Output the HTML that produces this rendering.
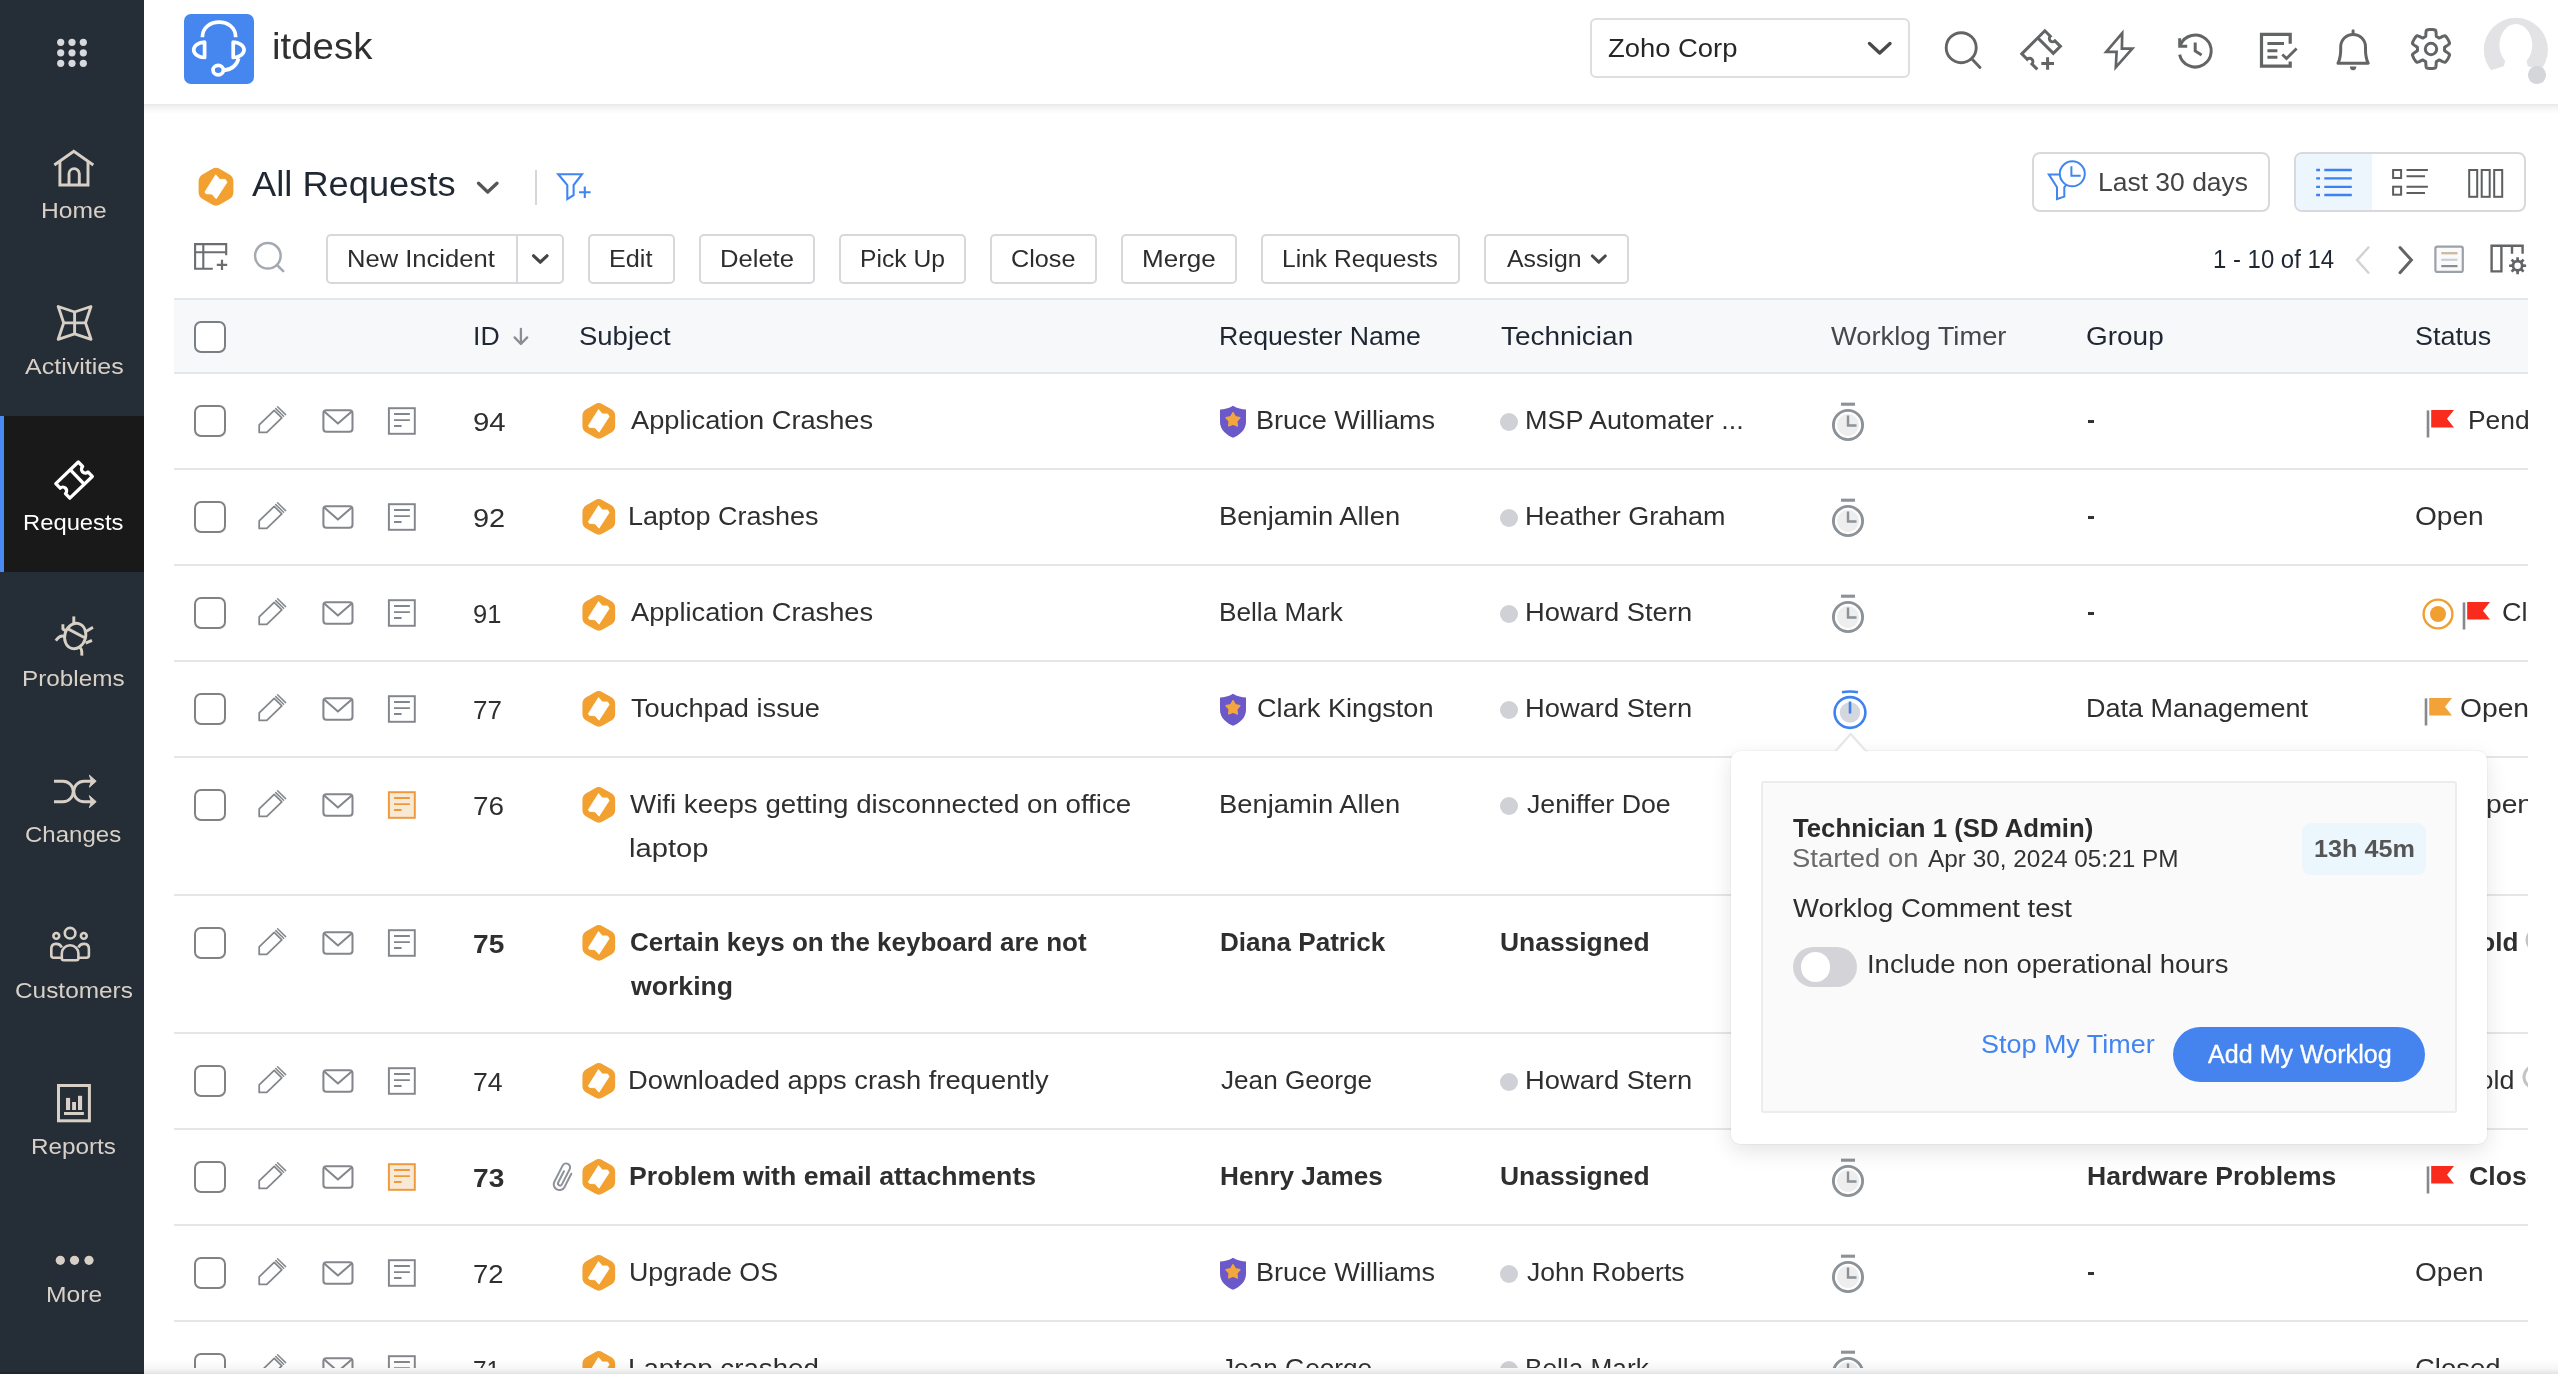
<!DOCTYPE html>
<html><head><meta charset="utf-8"><title>itdesk - All Requests</title>
<style>
html,body{margin:0;padding:0;background:#fff;}
body{width:2558px;height:1374px;overflow:hidden;font-family:"Liberation Sans",sans-serif;}
#root{position:relative;width:2558px;height:1374px;overflow:hidden;will-change:transform;}
.t{position:absolute;white-space:pre;font-family:"Liberation Sans",sans-serif;display:block;transform-origin:0 0;}
.btn{position:absolute;box-sizing:border-box;border:2px solid #d6d8dc;border-radius:5px;background:#fff;}
.cb{position:absolute;box-sizing:border-box;width:32px;height:32px;border:2px solid #808285;border-radius:7px;background:#fff;}
.hl{position:absolute;left:174px;width:2354px;height:2px;background:#e5e6e8;}
svg{overflow:visible;}

</style></head>
<body>
<div id="root">
<div style="position:absolute;left:174px;top:298px;width:2354px;height:76px;background:#f7f8fa;border-top:2px solid #e5e6e8;border-bottom:2px solid #e5e6e8;box-sizing:border-box"></div>
<div class="hl" style="top:468px"></div>
<div class="hl" style="top:564px"></div>
<div class="hl" style="top:660px"></div>
<div class="hl" style="top:756px"></div>
<div class="hl" style="top:894px"></div>
<div class="hl" style="top:1032px"></div>
<div class="hl" style="top:1128px"></div>
<div class="hl" style="top:1224px"></div>
<div class="hl" style="top:1320px"></div>
<div style="position:absolute;left:144px;top:104px;width:2414px;height:10px;background:linear-gradient(to bottom,#e8e8e8 0,#f1f1f1 25%,#f8f8f8 55%,#fff 100%)"></div>
<div style="position:absolute;left:184px;top:14px;width:70px;height:70px;background:#4587ef;border-radius:7px"></div>
<svg style="position:absolute;left:184px;top:14px;" width="70" height="70" viewBox="184 14 70 70"><g fill="none" stroke="#fff" stroke-width="3.7" stroke-linecap="butt" stroke-linejoin="round">
<path d="M202.4 37.2 C202.4 17 235.7 17 235.7 37.2"/>
<path d="M204.6 42.2 L204.6 57.5 A10.9 7.65 0 0 1 204.6 42.2 Z"/>
<path d="M233.2 42.2 L233.2 57.5 A10.9 7.65 0 0 0 233.2 42.2 Z"/>
<path d="M238.6 58.2 C236.6 66 231 69.6 223.6 70.4"/>
<ellipse cx="218.2" cy="70.1" rx="5.2" ry="4.7"/></g></svg>
<span class="t" style="left:272.10px;top:28px;font-size:37px;line-height:37px;font-weight:400;color:#303030;transform:scaleX(1.0383);">itdesk</span>
<div class="btn" style="left:1590px;top:17.5px;width:320px;height:60px;border-color:#dedede;border-radius:6px"></div>
<span class="t" style="left:1607.85px;top:36px;font-size:25.8px;line-height:25.8px;font-weight:400;color:#262626;transform:scaleX(1.0621);">Zoho Corp</span>
<svg style="position:absolute;left:1860px;top:30px;" width="40" height="36" viewBox="1860 30 40 36"><path d="M1869.5 43.5 L1879.7 53 L1890 43.5" fill="none" stroke="#4a4a4a" stroke-width="3.4" stroke-linecap="round" stroke-linejoin="round"/></svg>
<svg style="position:absolute;left:1936px;top:22px;" width="54" height="54" viewBox="1936 22 54 54"><g fill="none" stroke="#626466" stroke-width="2.9" stroke-linecap="round"><circle cx="1961.2" cy="47.7" r="15"/><path d="M1972.2 59.2 L1980 67.5"/></g></svg>
<svg style="position:absolute;left:2012px;top:20px;" width="58" height="60" viewBox="2012 20 58 60"><g transform="translate(2041.1 50.1) rotate(-45)" fill="none" stroke="#626466" stroke-width="3" stroke-linejoin="miter"><path d="M-16.3 11 L-16.3 3.3 A3.3 3.3 0 0 0 -16.3 -3.3 L-16.3 -11 L16.3 -11 L16.3 -3.3 A3.3 3.3 0 0 0 16.3 3.3 L16.3 11 L6.3 11 L6.3 -11"/></g><path d="M2041.3 63.5 L2054 63.5 M2047.6 57.2 L2047.6 69.8" stroke="#626466" stroke-width="3" fill="none"/></svg>
<svg style="position:absolute;left:2096px;top:22px;" width="46" height="56" viewBox="2096 22 46 56"><path d="M2122.2 33.2 L2106.2 51.9 L2116.6 51.9 L2115.8 67.3 L2132.3 48.6 L2121.9 48.6 Z" fill="none" stroke="#626466" stroke-width="2.7" stroke-linejoin="miter"/></svg>
<svg style="position:absolute;left:2170px;top:24px;" width="52" height="54" viewBox="2170 24 52 54"><g fill="none" stroke="#626466" stroke-width="3" stroke-linecap="butt" stroke-linejoin="miter">
<path d="M2180.5 44.7 A16 16 0 1 1 2179.6 54.6"/>
<path d="M2179.7 38.3 L2179.7 46.2 L2187.2 46.2"/><path d="M2195.2 42.6 L2195.2 51 L2201.6 55"/></g></svg>
<svg style="position:absolute;left:2252px;top:24px;" width="52" height="52" viewBox="2252 24 52 52"><g fill="none" stroke="#626466" stroke-width="3.2" stroke-linejoin="miter">
<path d="M2290.2 43.8 L2290.2 34.4 L2261.5 34.4 L2261.5 66.2 L2290.2 66.2 L2290.2 61.5"/>
<path d="M2267.4 43.5 L2284 43.5 M2267.4 50.7 L2277.4 50.7 M2267.4 57.3 L2277.4 57.3" stroke-width="3"/>
<path d="M2282.3 54.5 L2286.5 58.6 L2296.6 48.4" stroke-width="2.8"/></g></svg>
<svg style="position:absolute;left:2328px;top:24px;" width="50" height="54" viewBox="2328 24 50 54"><g fill="none" stroke="#626466" stroke-width="3" stroke-linejoin="round" stroke-linecap="round">
<path d="M2338 63.2 C2341.2 56.5 2340.7 52 2340.7 46.8 A12.4 12.4 0 0 1 2365.5 46.8 C2365.5 52 2365 56.5 2368.2 63.2 Z"/><path d="M2353.1 30.8 L2353.1 33.5"/></g>
<path d="M2349.9 66.6 A3.2 3.6 0 0 0 2356.3 66.6 Z" fill="#626466"/></svg>
<svg style="position:absolute;left:2404px;top:22px;" width="54" height="54" viewBox="2404 22 54 54"><g fill="none" stroke="#626466" stroke-width="3" stroke-linejoin="round"><path d="M2444.60 49.00 L2444.60 48.76 L2444.59 48.53 L2444.58 48.29 L2444.57 48.05 L2444.55 47.81 L2444.53 47.58 L2444.61 47.33 L2444.90 47.05 L2445.34 46.73 L2445.90 46.37 L2446.53 45.98 L2447.19 45.56 L2447.84 45.11 L2448.44 44.65 L2448.95 44.19 L2449.32 43.75 L2449.54 43.33 L2449.55 42.97 L2449.44 42.65 L2449.32 42.33 L2449.20 42.01 L2449.08 41.70 L2448.95 41.38 L2448.81 41.07 L2448.67 40.76 L2448.53 40.45 L2448.37 40.15 L2448.22 39.85 L2448.06 39.55 L2447.89 39.25 L2447.71 38.96 L2447.54 38.67 L2447.35 38.38 L2447.17 38.10 L2446.97 37.82 L2446.78 37.54 L2446.57 37.26 L2446.37 36.99 L2446.15 36.73 L2445.94 36.47 L2445.72 36.21 L2445.49 35.95 L2445.18 35.78 L2444.71 35.76 L2444.14 35.86 L2443.48 36.07 L2442.79 36.36 L2442.07 36.70 L2441.38 37.06 L2440.73 37.41 L2440.14 37.71 L2439.64 37.94 L2439.25 38.05 L2438.99 38.00 L2438.80 37.86 L2438.61 37.73 L2438.41 37.59 L2438.21 37.47 L2438.00 37.34 L2437.80 37.22 L2437.59 37.11 L2437.38 36.99 L2437.17 36.88 L2436.96 36.78 L2436.75 36.67 L2436.53 36.58 L2436.36 36.37 L2436.26 35.99 L2436.20 35.44 L2436.17 34.78 L2436.15 34.04 L2436.11 33.26 L2436.05 32.47 L2435.95 31.73 L2435.81 31.05 L2435.61 30.50 L2435.36 30.11 L2435.05 29.93 L2434.72 29.86 L2434.39 29.80 L2434.05 29.74 L2433.71 29.69 L2433.38 29.65 L2433.04 29.61 L2432.70 29.57 L2432.36 29.55 L2432.02 29.53 L2431.68 29.51 L2431.34 29.50 L2431.00 29.50 L2430.66 29.50 L2430.32 29.51 L2429.98 29.53 L2429.64 29.55 L2429.30 29.57 L2428.96 29.61 L2428.62 29.65 L2428.29 29.69 L2427.95 29.74 L2427.61 29.80 L2427.28 29.86 L2426.95 29.93 L2426.64 30.11 L2426.39 30.50 L2426.19 31.05 L2426.05 31.73 L2425.95 32.47 L2425.89 33.26 L2425.85 34.04 L2425.83 34.78 L2425.80 35.44 L2425.74 35.99 L2425.64 36.37 L2425.47 36.58 L2425.25 36.67 L2425.04 36.78 L2424.83 36.88 L2424.62 36.99 L2424.41 37.11 L2424.20 37.22 L2424.00 37.34 L2423.79 37.47 L2423.59 37.59 L2423.39 37.73 L2423.20 37.86 L2423.01 38.00 L2422.75 38.05 L2422.36 37.94 L2421.86 37.71 L2421.27 37.41 L2420.62 37.06 L2419.93 36.70 L2419.21 36.36 L2418.52 36.07 L2417.86 35.86 L2417.29 35.76 L2416.82 35.78 L2416.51 35.95 L2416.28 36.21 L2416.06 36.47 L2415.85 36.73 L2415.63 36.99 L2415.43 37.26 L2415.22 37.54 L2415.03 37.82 L2414.83 38.10 L2414.65 38.38 L2414.46 38.67 L2414.29 38.96 L2414.11 39.25 L2413.94 39.55 L2413.78 39.85 L2413.63 40.15 L2413.47 40.45 L2413.33 40.76 L2413.19 41.07 L2413.05 41.38 L2412.92 41.70 L2412.80 42.01 L2412.68 42.33 L2412.56 42.65 L2412.45 42.97 L2412.46 43.33 L2412.68 43.75 L2413.05 44.19 L2413.56 44.65 L2414.16 45.11 L2414.81 45.56 L2415.47 45.98 L2416.10 46.37 L2416.66 46.73 L2417.10 47.05 L2417.39 47.33 L2417.47 47.58 L2417.45 47.81 L2417.43 48.05 L2417.42 48.29 L2417.41 48.53 L2417.40 48.76 L2417.40 49.00 L2417.40 49.24 L2417.41 49.47 L2417.42 49.71 L2417.43 49.95 L2417.45 50.19 L2417.47 50.42 L2417.39 50.67 L2417.10 50.95 L2416.66 51.27 L2416.10 51.63 L2415.47 52.02 L2414.81 52.44 L2414.16 52.89 L2413.56 53.35 L2413.05 53.81 L2412.68 54.25 L2412.46 54.67 L2412.45 55.03 L2412.56 55.35 L2412.68 55.67 L2412.80 55.99 L2412.92 56.30 L2413.05 56.62 L2413.19 56.93 L2413.33 57.24 L2413.47 57.55 L2413.63 57.85 L2413.78 58.15 L2413.94 58.45 L2414.11 58.75 L2414.29 59.04 L2414.46 59.33 L2414.65 59.62 L2414.83 59.90 L2415.03 60.18 L2415.22 60.46 L2415.43 60.74 L2415.63 61.01 L2415.85 61.27 L2416.06 61.53 L2416.28 61.79 L2416.51 62.05 L2416.82 62.22 L2417.29 62.24 L2417.86 62.14 L2418.52 61.93 L2419.21 61.64 L2419.93 61.30 L2420.62 60.94 L2421.27 60.59 L2421.86 60.29 L2422.36 60.06 L2422.75 59.95 L2423.01 60.00 L2423.20 60.14 L2423.39 60.27 L2423.59 60.41 L2423.79 60.53 L2424.00 60.66 L2424.20 60.78 L2424.41 60.89 L2424.62 61.01 L2424.83 61.12 L2425.04 61.22 L2425.25 61.33 L2425.47 61.42 L2425.64 61.63 L2425.74 62.01 L2425.80 62.56 L2425.83 63.22 L2425.85 63.96 L2425.89 64.74 L2425.95 65.53 L2426.05 66.27 L2426.19 66.95 L2426.39 67.50 L2426.64 67.89 L2426.95 68.07 L2427.28 68.14 L2427.61 68.20 L2427.95 68.26 L2428.29 68.31 L2428.62 68.35 L2428.96 68.39 L2429.30 68.43 L2429.64 68.45 L2429.98 68.47 L2430.32 68.49 L2430.66 68.50 L2431.00 68.50 L2431.34 68.50 L2431.68 68.49 L2432.02 68.47 L2432.36 68.45 L2432.70 68.43 L2433.04 68.39 L2433.38 68.35 L2433.71 68.31 L2434.05 68.26 L2434.39 68.20 L2434.72 68.14 L2435.05 68.07 L2435.36 67.89 L2435.61 67.50 L2435.81 66.95 L2435.95 66.27 L2436.05 65.53 L2436.11 64.74 L2436.15 63.96 L2436.17 63.22 L2436.20 62.56 L2436.26 62.01 L2436.36 61.63 L2436.53 61.42 L2436.75 61.33 L2436.96 61.22 L2437.17 61.12 L2437.38 61.01 L2437.59 60.89 L2437.80 60.78 L2438.00 60.66 L2438.21 60.53 L2438.41 60.41 L2438.61 60.27 L2438.80 60.14 L2438.99 60.00 L2439.25 59.95 L2439.64 60.06 L2440.14 60.29 L2440.73 60.59 L2441.38 60.94 L2442.07 61.30 L2442.79 61.64 L2443.48 61.93 L2444.14 62.14 L2444.71 62.24 L2445.18 62.22 L2445.49 62.05 L2445.72 61.79 L2445.94 61.53 L2446.15 61.27 L2446.37 61.01 L2446.57 60.74 L2446.78 60.46 L2446.97 60.18 L2447.17 59.90 L2447.35 59.62 L2447.54 59.33 L2447.71 59.04 L2447.89 58.75 L2448.06 58.45 L2448.22 58.15 L2448.37 57.85 L2448.53 57.55 L2448.67 57.24 L2448.81 56.93 L2448.95 56.62 L2449.08 56.30 L2449.20 55.99 L2449.32 55.67 L2449.44 55.35 L2449.55 55.03 L2449.54 54.67 L2449.32 54.25 L2448.95 53.81 L2448.44 53.35 L2447.84 52.89 L2447.19 52.44 L2446.53 52.02 L2445.90 51.63 L2445.34 51.27 L2444.90 50.95 L2444.61 50.67 L2444.53 50.42 L2444.55 50.19 L2444.57 49.95 L2444.58 49.71 L2444.59 49.47 L2444.60 49.24Z"/><circle cx="2431" cy="49" r="5.7"/></g></svg>
<svg style="position:absolute;left:2480px;top:14px;" width="78" height="78" viewBox="2480 14 78 78"><circle cx="2515.85" cy="49.85" r="32.05" fill="#e3e3e5"/>
<ellipse cx="2515.85" cy="45" rx="16.4" ry="21" fill="#fff"/>
<path d="M2506 58 L2505.3 60.6 L2503.9 66.2 L2480 73.6 L2480 92 L2552 92 L2552 73.6 L2527.8 66.2 L2526.4 60.6 L2525.7 58 Z" fill="#fff"/>
<circle cx="2537" cy="75" r="9.1" fill="#d5d6da"/></svg>
<div style="position:absolute;left:0px;top:0px;width:144px;height:1374px;background:#252e37"></div>
<div style="position:absolute;left:0px;top:416px;width:144px;height:156px;background:#191919"></div>
<div style="position:absolute;left:0px;top:416px;width:4px;height:156px;background:#4a8af4"></div>
<svg style="position:absolute;left:0px;top:0px;" width="144" height="104" viewBox="0 0 144 104"><g fill="#d7d9dc"><circle cx="60.7" cy="42.3" r="3.6"/><circle cx="72" cy="42.3" r="3.6"/><circle cx="83.3" cy="42.3" r="3.6"/><circle cx="60.7" cy="52.8" r="3.6"/><circle cx="72" cy="52.8" r="3.6"/><circle cx="83.3" cy="52.8" r="3.6"/><circle cx="60.7" cy="63.3" r="3.6"/><circle cx="72" cy="63.3" r="3.6"/><circle cx="83.3" cy="63.3" r="3.6"/></g></svg>
<svg style="position:absolute;left:44px;top:140px;" width="60" height="56" viewBox="44 140 60 56"><g fill="none" stroke="#d8d0c6" stroke-width="2.9" stroke-linejoin="miter" stroke-linecap="butt">
<path d="M54.3 165 L73.8 151.3 L93.3 165"/><path d="M59.9 161.5 L59.9 185 L88 185 L88 161.5"/><path d="M69 185 L69 173.8 A5.15 5.15 0 0 1 79.3 173.8 L79.3 185"/></g></svg>
<span class="t" style="left:40.87px;top:200px;font-size:22.3px;line-height:22.3px;font-weight:400;color:#d8d0c6;transform:scaleX(1.1048);">Home</span>
<svg style="position:absolute;left:44px;top:292px;" width="62" height="62" viewBox="44 292 62 62"><g fill="none" stroke="#d8d0c6" stroke-width="2.9" stroke-linejoin="round">
<path d="M91.0 306.5 L74.6 312.0 L58.2 306.5 L63.7 322.9 L58.2 339.3 L74.6 333.8 L91.0 339.3 L85.5 322.9 Z"/><path d="M74.6 312.0 L74.6 333.79999999999995 M63.699999999999996 322.9 L85.5 322.9"/></g></svg>
<span class="t" style="left:25.00px;top:356px;font-size:22.3px;line-height:22.3px;font-weight:400;color:#d8d0c6;transform:scaleX(1.1221);">Activities</span>
<svg style="position:absolute;left:44px;top:450px;" width="62" height="62" viewBox="44 450 62 62"><g transform="translate(74.05 480.05) rotate(-44)" fill="none" stroke="#fff" stroke-width="3.3" stroke-linejoin="round">
<path d="M-15.6 -10.1 L15.6 -10.1 L15.6 -3.8 A3.8 3.8 0 0 0 15.6 3.8 L15.6 10.1 L-15.6 10.1 L-15.6 3.8 A3.8 3.8 0 0 0 -15.6 -3.8 Z"/><path d="M4.4 -10.1 L4.4 10.1"/></g></svg>
<span class="t" style="left:23.13px;top:512px;font-size:22.3px;line-height:22.3px;font-weight:400;color:#fff;transform:scaleX(1.0670);">Requests</span>
<svg style="position:absolute;left:44px;top:606px;" width="62" height="62" viewBox="44 606 62 62"><g fill="none" stroke="#d8d0c6" stroke-width="2.9" stroke-linecap="butt" stroke-linejoin="round">
<ellipse cx="75.2" cy="636" rx="10.4" ry="12.9" transform="rotate(16 75.2 636)"/>
<path d="M67.5 628.6 L84.3 637.5"/>
<path d="M73.8 623.2 L73.8 616.4"/><path d="M66.2 631.2 L62.9 629 L62.9 624.2"/>
<path d="M64.8 636.4 C61 635 58 637.5 55.8 640.6"/>
<path d="M86 631.6 L93 627.2"/><path d="M85.6 643.2 L92 640.4"/>
<path d="M78.6 647 C81.5 648 82 650 81.8 655.6"/></g></svg>
<span class="t" style="left:22.09px;top:668px;font-size:22.3px;line-height:22.3px;font-weight:400;color:#d8d0c6;transform:scaleX(1.0891);">Problems</span>
<svg style="position:absolute;left:44px;top:766px;" width="62" height="52" viewBox="44 766 62 52"><g fill="none" stroke="#d8d0c6" stroke-width="2.9" stroke-linecap="butt" stroke-linejoin="miter">
<path d="M54 781.2 L63 781.2 A10.25 10.25 0 0 1 63 801.7 L54 801.7"/>
<path d="M92 781.2 L84 781.2 A10.25 10.25 0 0 0 84 801.7 L92 801.7"/>
</g><path d="M89.4 775.2 L96.2 781.2 L89.4 787.2 L91.4 781.2 Z M89.4 795.7 L96.2 801.7 L89.4 807.7 L91.4 801.7 Z" fill="#d8d0c6" stroke="#d8d0c6" stroke-width="1" stroke-linejoin="round"/></svg>
<span class="t" style="left:25.37px;top:824px;font-size:22.3px;line-height:22.3px;font-weight:400;color:#d8d0c6;transform:scaleX(1.0772);">Changes</span>
<svg style="position:absolute;left:40px;top:920px;" width="66" height="50" viewBox="40 920 66 50"><g fill="none" stroke="#d8d0c6" stroke-width="2.6" stroke-linejoin="round">
<circle cx="70.1" cy="933.2" r="5.3"/><circle cx="56.3" cy="935.9" r="2.9"/><circle cx="83.8" cy="935.9" r="2.9"/>
<path d="M61.8 958.3 L61.8 953.5 A8.3 8.3 0 0 1 78.4 953.5 L78.4 958.3 Q78.4 960.3 76.4 960.3 L63.8 960.3 Q61.8 960.3 61.8 958.3 Z"/>
<path d="M61.8 957.7 L53.8 957.7 Q51.3 957.7 51.3 955.2 L51.3 949 C51.3 942.5 59.5 942.3 61.8 947.5"/>
<path d="M78.4 957.7 L86.4 957.7 Q88.9 957.7 88.9 955.2 L88.9 949 C88.9 942.5 80.7 942.3 78.4 947.5"/></g></svg>
<span class="t" style="left:14.96px;top:980px;font-size:22.3px;line-height:22.3px;font-weight:400;color:#d8d0c6;transform:scaleX(1.0934);">Customers</span>
<svg style="position:absolute;left:50px;top:1078px;" width="48" height="50" viewBox="50 1078 48 50"><rect x="58.5" y="1085.5" width="30.9" height="35.3" fill="none" stroke="#d8d0c6" stroke-width="3"/>
<g fill="#d8d0c6"><rect x="66" y="1097.9" width="4.1" height="12.1"/><rect x="72.1" y="1102" width="3.9" height="8"/><rect x="78" y="1095.8" width="4.1" height="14.2"/><rect x="64" y="1112" width="19.9" height="3"/></g></svg>
<span class="t" style="left:30.99px;top:1136px;font-size:22.3px;line-height:22.3px;font-weight:400;color:#d8d0c6;transform:scaleX(1.0887);">Reports</span>
<svg style="position:absolute;left:50px;top:1250px;" width="50" height="22" viewBox="50 1250 50 22"><g fill="#d8d0c6"><circle cx="60.3" cy="1260.3" r="4.6"/><circle cx="74.5" cy="1260.3" r="4.6"/><circle cx="89" cy="1260.3" r="4.6"/></g></svg>
<span class="t" style="left:45.57px;top:1284px;font-size:22.3px;line-height:22.3px;font-weight:400;color:#d8d0c6;transform:scaleX(1.1042);">More</span>
<svg style="position:absolute;left:197px;top:165px;" width="38" height="43" viewBox="197 165 38 43"><path d="M212.02 169.01 Q216.00 166.70 219.98 169.01 L229.42 174.49 Q233.40 176.80 233.40 181.40 L233.40 192.20 Q233.40 196.80 229.42 199.11 L219.98 204.59 Q216.00 206.90 212.02 204.59 L202.58 199.11 Q198.60 196.80 198.60 192.20 L198.60 181.40 Q198.60 176.80 202.58 174.49 Z" fill="#f2a02f"/><path d="M215.72 174.80 L219.63 179.36 L225.30 179.45 L227.07 182.15 L216.19 198.80 L212.00 194.05 L205.96 193.68 L204.93 192.01 Z" fill="#fff" stroke="#fff" stroke-width="0.8" stroke-linejoin="round"/></svg>
<span class="t" style="left:252.20px;top:167px;font-size:35.6px;line-height:35.6px;font-weight:400;color:#1f2733;transform:scaleX(1.0194);">All Requests</span>
<svg style="position:absolute;left:470px;top:174px;" width="36" height="28" viewBox="470 174 36 28"><path d="M478.5 183.2 L487.7 192 L497 183.2" fill="none" stroke="#555" stroke-width="3.3" stroke-linecap="round" stroke-linejoin="round"/></svg>
<div style="position:absolute;left:535px;top:169.5px;width:2px;height:35px;background:#d6d6d6"></div>
<svg style="position:absolute;left:552px;top:168px;" width="44" height="38" viewBox="552 168 44 38"><g fill="none" stroke="#3f86f1" stroke-width="2.1" stroke-linejoin="miter"><path d="M558.2 174.2 L582 174.2 L573.6 185.2 L573.6 195.2 L567.3 199.2 L567.3 185.2 Z"/><path d="M579 192.2 L590.6 192.2 M584.8 186.4 L584.8 198"/></g></svg>
<div class="btn" style="left:2032px;top:152px;width:238px;height:60px;border-color:#d7d9dd;border-radius:8px"></div>
<svg style="position:absolute;left:2044px;top:156px;" width="48" height="48" viewBox="2044 156 48 48"><g fill="none" stroke="#3f86f1" stroke-width="2" stroke-linejoin="miter" stroke-linecap="butt">
<circle cx="2072.3" cy="173.8" r="12.5"/><path d="M2071.4 166.3 L2071.4 175.7 L2080.7 175.7"/>
<path d="M2059.6 174.4 L2048.8 174.4 L2057 187.3 L2057 199 L2064.3 196.6 L2064.3 187.3 L2066.3 184.8"/></g></svg>
<span class="t" style="left:2097.79px;top:170px;font-size:25.7px;line-height:25.7px;font-weight:400;color:#444;transform:scaleX(1.0301);">Last 30 days</span>
<div class="btn" style="left:2294px;top:152px;width:232px;height:60px;border-color:#d7d9dd;border-radius:8px;overflow:hidden"><div style="position:absolute;left:0;top:0;width:76px;height:56px;background:#edf6fd"></div></div>
<svg style="position:absolute;left:2310px;top:162px;" width="48" height="40" viewBox="2310 162 48 40"><g stroke="#3b82f0" stroke-width="2.3" fill="none"><path d="M2316.2 170 L2320 170 M2324.3 170 L2351.8 170"/><path d="M2316.2 178.4 L2320 178.4 M2324.3 178.4 L2351.8 178.4"/><path d="M2316.2 186.8 L2320 186.8 M2324.3 186.8 L2351.8 186.8"/><path d="M2316.2 195 L2320 195 M2324.3 195 L2351.8 195"/></g></svg>
<svg style="position:absolute;left:2386px;top:162px;" width="48" height="40" viewBox="2386 162 48 40"><g stroke="#5d5e60" stroke-width="2" fill="none"><rect x="2393.1" y="170" width="8" height="8"/><rect x="2393.1" y="186.7" width="8" height="8"/><path d="M2406.5 170 L2427.9 170 M2406.5 176.3 L2425 176.3 M2406.5 186.8 L2427.9 186.8 M2406.5 192.9 L2425 192.9"/></g></svg>
<svg style="position:absolute;left:2462px;top:162px;" width="48" height="40" viewBox="2462 162 48 40"><g stroke="#5d5e60" stroke-width="2" fill="none"><rect x="2469.2" y="170" width="8" height="26.8"/><rect x="2481.7" y="170" width="8" height="26.8"/><rect x="2494.2" y="170" width="8" height="26.8"/></g></svg>
<svg style="position:absolute;left:190px;top:238px;" width="42" height="38" viewBox="190 238 42 38"><g fill="none" stroke="#6b6d70" stroke-width="2.1" stroke-linejoin="miter"><path d="M226.2 255.3 L226.2 244.1 L195.1 244.1 L195.1 268.7 L212.8 268.7 M195.1 252.2 L226.2 252.2 M203.3 244.1 L203.3 268.7"/><path d="M216.8 264.9 L227.2 264.9 M222 259.7 L222 270.1" stroke-width="2.2"/></g></svg>
<svg style="position:absolute;left:250px;top:238px;" width="40" height="40" viewBox="250 238 40 40"><g fill="none" stroke="#a4aab2" stroke-width="2.5" stroke-linecap="round"><circle cx="267.85" cy="255.8" r="12.8"/><path d="M277 265 L283.2 271.2"/></g></svg>
<div class="btn" style="left:326px;top:234px;width:238px;height:50px"></div>
<span class="t" style="left:347.20px;top:247px;font-size:24.4px;line-height:24.4px;font-weight:400;color:#2d2d2d;transform:scaleX(1.0479);">New Incident</span>
<div style="position:absolute;left:516px;top:236px;width:2px;height:46px;background:#d6d8dc"></div>
<svg style="position:absolute;left:526px;top:246px;" width="30" height="28" viewBox="526 246 30 28"><path d="M533.6 255.8 L540.3 262.2 L547 255.8" fill="none" stroke="#444" stroke-width="3.2" stroke-linecap="round" stroke-linejoin="round"/></svg>
<div class="btn" style="left:588px;top:234px;width:87px;height:50px"></div>
<span class="t" style="left:608.93px;top:247px;font-size:24.4px;line-height:24.4px;font-weight:400;color:#2d2d2d;transform:scaleX(1.0340);">Edit</span>
<div class="btn" style="left:699px;top:234px;width:116px;height:50px"></div>
<span class="t" style="left:719.70px;top:247px;font-size:24.4px;line-height:24.4px;font-weight:400;color:#2d2d2d;transform:scaleX(1.0489);">Delete</span>
<div class="btn" style="left:839px;top:234px;width:127px;height:50px"></div>
<span class="t" style="left:859.98px;top:247px;font-size:24.4px;line-height:24.4px;font-weight:400;color:#2d2d2d;transform:scaleX(1.0117);">Pick Up</span>
<div class="btn" style="left:990px;top:234px;width:107px;height:50px"></div>
<span class="t" style="left:1011.46px;top:247px;font-size:24.4px;line-height:24.4px;font-weight:400;color:#2d2d2d;transform:scaleX(1.0333);">Close</span>
<div class="btn" style="left:1121px;top:234px;width:116px;height:50px"></div>
<span class="t" style="left:1142.27px;top:247px;font-size:24.4px;line-height:24.4px;font-weight:400;color:#2d2d2d;transform:scaleX(1.0674);">Merge</span>
<div class="btn" style="left:1261px;top:234px;width:199px;height:50px"></div>
<span class="t" style="left:1281.98px;top:247px;font-size:24.4px;line-height:24.4px;font-weight:400;color:#2d2d2d;transform:scaleX(1.0082);">Link Requests</span>
<div class="btn" style="left:1484px;top:234px;width:145px;height:50px"></div>
<span class="t" style="left:1507.00px;top:247px;font-size:24.4px;line-height:24.4px;font-weight:400;color:#2d2d2d;transform:scaleX(1.0175);">Assign</span>
<svg style="position:absolute;left:1586px;top:246px;" width="28" height="28" viewBox="1586 246 28 28"><path d="M1592.4 256 L1598.8 262.2 L1605.2 256" fill="none" stroke="#484848" stroke-width="3.1" stroke-linecap="round" stroke-linejoin="round"/></svg>
<span class="t" style="left:2212.94px;top:246px;font-size:26.5px;line-height:26.5px;font-weight:400;color:#1f2733;transform:scaleX(0.9029);">1 - 10 of 14</span>
<svg style="position:absolute;left:2350px;top:240px;" width="26" height="40" viewBox="2350 240 26 40"><path d="M2368.4 247.5 L2357 260.1 L2368.4 272.7" fill="none" stroke="#d2d2d2" stroke-width="2.4" stroke-linecap="round" stroke-linejoin="miter"/></svg>
<svg style="position:absolute;left:2394px;top:240px;" width="26" height="40" viewBox="2394 240 26 40"><path d="M2400 247.5 L2411.4 260.1 L2400 272.7" fill="none" stroke="#636466" stroke-width="3" stroke-linecap="round" stroke-linejoin="miter"/></svg>
<svg style="position:absolute;left:2430px;top:242px;" width="38" height="36" viewBox="2430 242 38 36"><rect x="2435.4" y="246.7" width="27.4" height="25.2" rx="2" fill="#fafafa" stroke="#9ba1a9" stroke-width="2.2"/><path d="M2441.3 253.2 L2457.5 253.2" stroke="#cbbba9" stroke-width="2.4"/><path d="M2441.3 259.8 L2457.5 259.8" stroke="#c6d0da" stroke-width="2.2"/><path d="M2441.3 266.1 L2457.5 266.1" stroke="#8b8d90" stroke-width="2.2"/></svg>
<svg style="position:absolute;left:2486px;top:240px;" width="44" height="40" viewBox="2486 240 44 40"><g fill="none" stroke="#636466" stroke-width="2.4" stroke-linejoin="miter"><path d="M2522.6 253.8 L2522.6 245.7 L2491.6 245.7 L2491.6 271.4 L2501.4 271.4 L2501.4 245.7 M2512 245.7 L2512 253.8"/></g><path d="M2516.3 257.2 L2518.9 257.2 L2519.0 259.9 L2520.7 260.6 L2522.7 258.8 L2524.5 260.6 L2522.7 262.6 L2523.4 264.3 L2526.1 264.4 L2526.1 267.0 L2523.4 267.1 L2522.7 268.8 L2524.5 270.8 L2522.7 272.6 L2520.7 270.8 L2519.0 271.5 L2518.9 274.2 L2516.3 274.2 L2516.2 271.5 L2514.5 270.8 L2512.5 272.6 L2510.7 270.8 L2512.5 268.8 L2511.8 267.1 L2509.1 267.0 L2509.1 264.4 L2511.8 264.3 L2512.5 262.6 L2510.7 260.6 L2512.5 258.8 L2514.5 260.6 L2516.2 259.9Z" fill="#636466"/><circle cx="2517.6" cy="265.7" r="3.2" fill="#fff"/></svg>
<div class="cb" style="left:194px;top:321px;border-color:#7b7e83"></div>
<span class="t" style="left:472.83px;top:324px;font-size:25.4px;line-height:25.4px;font-weight:400;color:#1f2733;transform:scaleX(1.0502);">ID</span>
<svg style="position:absolute;left:506px;top:322px;" width="28" height="30" viewBox="506 322 28 30"><path d="M520.9 329 L520.9 343.6 M514.6 337.4 L520.9 344 L527.2 337.4" fill="none" stroke="#8a8d91" stroke-width="2.3" stroke-linecap="round" stroke-linejoin="round"/></svg>
<span class="t" style="left:579.38px;top:324px;font-size:25px;line-height:25px;font-weight:400;color:#1f2733;transform:scaleX(1.0994);">Subject</span>
<span class="t" style="left:1218.91px;top:324px;font-size:25px;line-height:25px;font-weight:400;color:#1f2733;transform:scaleX(1.0686);">Requester Name</span>
<span class="t" style="left:1501.14px;top:324px;font-size:25px;line-height:25px;font-weight:400;color:#1f2733;transform:scaleX(1.1190);">Technician</span>
<span class="t" style="left:1830.78px;top:324px;font-size:25px;line-height:25px;font-weight:400;color:#45474a;transform:scaleX(1.0916);">Worklog Timer</span>
<span class="t" style="left:2085.60px;top:324px;font-size:25px;line-height:25px;font-weight:400;color:#1f2733;transform:scaleX(1.1182);">Group</span>
<span class="t" style="left:2414.90px;top:324px;font-size:25px;line-height:25px;font-weight:400;color:#1f2733;transform:scaleX(1.0764);">Status</span>
<div style="position:absolute;left:2400px;top:374px;width:128px;height:1000px;overflow:hidden">
<svg style="position:absolute;left:23.800000000000182px;top:33px;" width="36" height="34" viewBox="0 0 36 34"><path d="M4 3.4 L4 30.5" stroke="#85888c" stroke-width="2.6"/><path d="M7.2 2.9 L30 2.9 L23 11.8 L30 20.6 L7.2 20.6 Z" fill="#f92b1d"/></svg>
<span class="t" style="left:67.64px;top:34px;font-size:25px;line-height:25px;font-weight:400;color:#2f2f2f;transform:scaleX(1.0548);">Pend</span>
<span class="t" style="left:14.75px;top:130px;font-size:25px;line-height:25px;font-weight:400;color:#2f2f2f;transform:scaleX(1.1236);">Open</span>
<svg style="position:absolute;left:21px;top:223.39999999999998px;" width="34" height="34" viewBox="0 0 34 34"><circle cx="17" cy="17" r="14.4" fill="none" stroke="#f0a030" stroke-width="2.4"/><circle cx="17" cy="17" r="8" fill="#f0a030"/></svg>
<svg style="position:absolute;left:59.80000000000018px;top:225px;" width="36" height="34" viewBox="0 0 36 34"><path d="M4 3.4 L4 30.5" stroke="#85888c" stroke-width="2.6"/><path d="M7.2 2.9 L30 2.9 L23 11.8 L30 20.6 L7.2 20.6 Z" fill="#f92b1d"/></svg>
<span class="t" style="left:102.40px;top:226px;font-size:25px;line-height:25px;font-weight:400;color:#2f2f2f;transform:scaleX(1.0800);">Closed</span>
<svg style="position:absolute;left:21.699999999999818px;top:321px;" width="36" height="34" viewBox="0 0 36 34"><path d="M4 3.4 L4 30.5" stroke="#85888c" stroke-width="2.6"/><path d="M7.2 2.9 L30 2.9 L23 11.8 L30 20.6 L7.2 20.6 Z" fill="#f2a238"/></svg>
<span class="t" style="left:60.34px;top:322px;font-size:25px;line-height:25px;font-weight:400;color:#2f2f2f;transform:scaleX(1.1288);">Open</span>
<span class="t" style="left:64.34px;top:418px;font-size:25px;line-height:25px;font-weight:400;color:#2f2f2f;transform:scaleX(1.1288);">Open</span>
<span class="t" style="left:16.96px;top:556px;font-size:25px;line-height:25px;font-weight:700;color:#2f2f2f;transform:scaleX(1.0423);">On Hold</span>
<span class="t" style="left:16.41px;top:694px;font-size:25px;line-height:25px;font-weight:400;color:#2f2f2f;transform:scaleX(1.0732);">On Hold</span>
<svg style="position:absolute;left:123px;top:551px;" width="30" height="30" viewBox="0 0 30 30"><circle cx="15" cy="15" r="11" fill="none" stroke="#c4c4c4" stroke-width="3"/></svg>
<svg style="position:absolute;left:120px;top:688px;" width="30" height="30" viewBox="0 0 30 30"><circle cx="15" cy="15" r="11" fill="none" stroke="#c4c4c4" stroke-width="3"/></svg>
<svg style="position:absolute;left:23.800000000000182px;top:789px;" width="36" height="34" viewBox="0 0 36 34"><path d="M4 3.4 L4 30.5" stroke="#85888c" stroke-width="2.6"/><path d="M7.2 2.9 L30 2.9 L23 11.8 L30 20.6 L7.2 20.6 Z" fill="#f92b1d"/></svg>
<span class="t" style="left:69.13px;top:790px;font-size:25px;line-height:25px;font-weight:700;color:#2f2f2f;transform:scaleX(1.0650);">Closed</span>
<span class="t" style="left:14.75px;top:886px;font-size:25px;line-height:25px;font-weight:400;color:#2f2f2f;transform:scaleX(1.1210);">Open</span>
<span class="t" style="left:14.53px;top:982px;font-size:25px;line-height:25px;font-weight:400;color:#2f2f2f;transform:scaleX(1.0987);">Closed</span>
</div>
<div class="cb" style="left:194px;top:405px"></div>
<svg style="position:absolute;left:254px;top:402px;" width="36" height="36" viewBox="254 402 36 36"><g transform="translate(0 0)"><g fill="none" stroke="#83878b" stroke-width="1.75" stroke-linejoin="round" stroke-linecap="round">
<path d="M259.2 432.4 L259.2 424.8 L274.2 410.4 L281.8 417.8 L266.8 432.4 Z"/><path d="M275.8 408.6 L283.6 416.2" stroke-width="1.5"/><path d="M277.6 406.8 L285.6 414.6" stroke-width="1.5"/></g></g></svg>
<svg style="position:absolute;left:318px;top:404px;" width="40" height="34" viewBox="318 404 40 34"><g transform="translate(0 0)"><g fill="none" stroke="#83878b" stroke-width="2.05" stroke-linejoin="round"><rect x="323.4" y="410.3" width="29.1" height="21.4" rx="3"/><path d="M324.5 411.8 L337.95 423.6 L351.4 411.8"/></g></g></svg>
<svg style="position:absolute;left:384px;top:402px;" width="36" height="38" viewBox="384 402 36 38"><g transform="translate(0 0)"><rect x="388.9" y="408.2" width="25.9" height="25.6" fill="none" stroke="#83878b" stroke-width="1.95"/><path d="M394 414 L409.9 414 M394 420.1 L409.9 420.1 M394 426 L401.6 426" stroke="#83878b" stroke-width="1.95" fill="none"/></g></svg>
<span class="t" style="left:472.94px;top:409px;font-size:26px;line-height:26px;font-weight:400;color:#2f2f2f;transform:scaleX(1.1296);">94</span>
<svg style="position:absolute;left:581px;top:401px;" width="36" height="40" viewBox="581 401 36 40"><path d="M595.06 404.18 Q598.80 402.01 602.54 404.18 L611.42 409.33 Q615.16 411.50 615.16 415.82 L615.16 425.98 Q615.16 430.30 611.42 432.47 L602.54 437.62 Q598.80 439.79 595.06 437.62 L586.18 432.47 Q582.44 430.30 582.44 425.98 L582.44 415.82 Q582.44 411.50 586.18 409.33 Z" fill="#f2a02f"/><path d="M598.54 409.62 L602.21 413.91 L607.54 413.99 L609.20 416.53 L598.97 432.18 L595.04 427.72 L589.36 427.37 L588.40 425.80 Z" fill="#fff" stroke="#fff" stroke-width="0.8" stroke-linejoin="round"/></svg>
<span class="t" style="left:630.90px;top:408px;font-size:25px;line-height:25px;font-weight:400;color:#2f2f2f;transform:scaleX(1.0889);">Application Crashes</span>
<svg style="position:absolute;left:1219px;top:404px;" width="28" height="35" viewBox="1219 404 28 35"><path d="M1233 405.8 C1237 408.40000000000003 1242 409.40000000000003 1246 409.6 L1246 421.8 C1246 430.3 1239 435.3 1233 437.8 C1227 435.3 1220 430.3 1220 421.8 L1220 409.6 C1224 409.40000000000003 1229 408.40000000000003 1233 405.8 Z" fill="#6b58c9"/><path d="M1233.00 412.80 L1230.71 416.84 L1226.15 417.78 L1229.29 421.21 L1228.77 425.82 L1233.00 423.90 L1237.23 425.82 L1236.71 421.21 L1239.85 417.78 L1235.29 416.84 Z" fill="#f3a63c" stroke="#f3a63c" stroke-width="1.6" stroke-linejoin="round"/></svg>
<span class="t" style="left:1255.88px;top:408px;font-size:25px;line-height:25px;font-weight:400;color:#2f2f2f;transform:scaleX(1.0837);">Bruce Williams</span>
<div style="position:absolute;left:1500px;top:413px;width:18px;height:18px;background:#d0d1d6;border-radius:50%"></div>
<span class="t" style="left:1525.09px;top:408px;font-size:25px;line-height:25px;font-weight:400;color:#2f2f2f;transform:scaleX(1.0806);">MSP Automater ...</span>
<svg style="position:absolute;left:1828px;top:399px;" width="40" height="46" viewBox="1828 399 40 46"><circle cx="1848" cy="425" r="14.6" fill="#fff" stroke="#8b9298" stroke-width="2.9"/><circle cx="1848" cy="425" r="11" fill="#eeeeef"/><path d="M1841 404.2 L1855 404.2" stroke="#8b9298" stroke-width="3.1"/><path d="M1848 415.5 L1848 425.5 L1856.5 425.5" stroke="#8b9298" stroke-width="2.4" fill="none"/></svg>
<div style="position:absolute;left:2088px;top:420.4px;width:6px;height:2.6px;background:#333"></div>
<div class="cb" style="left:194px;top:501px"></div>
<svg style="position:absolute;left:254px;top:498px;" width="36" height="36" viewBox="254 498 36 36"><g transform="translate(0 96)"><g fill="none" stroke="#83878b" stroke-width="1.75" stroke-linejoin="round" stroke-linecap="round">
<path d="M259.2 432.4 L259.2 424.8 L274.2 410.4 L281.8 417.8 L266.8 432.4 Z"/><path d="M275.8 408.6 L283.6 416.2" stroke-width="1.5"/><path d="M277.6 406.8 L285.6 414.6" stroke-width="1.5"/></g></g></svg>
<svg style="position:absolute;left:318px;top:500px;" width="40" height="34" viewBox="318 500 40 34"><g transform="translate(0 96)"><g fill="none" stroke="#83878b" stroke-width="2.05" stroke-linejoin="round"><rect x="323.4" y="410.3" width="29.1" height="21.4" rx="3"/><path d="M324.5 411.8 L337.95 423.6 L351.4 411.8"/></g></g></svg>
<svg style="position:absolute;left:384px;top:498px;" width="36" height="38" viewBox="384 498 36 38"><g transform="translate(0 96)"><rect x="388.9" y="408.2" width="25.9" height="25.6" fill="none" stroke="#83878b" stroke-width="1.95"/><path d="M394 414 L409.9 414 M394 420.1 L409.9 420.1 M394 426 L401.6 426" stroke="#83878b" stroke-width="1.95" fill="none"/></g></svg>
<span class="t" style="left:472.96px;top:505px;font-size:26px;line-height:26px;font-weight:400;color:#2f2f2f;transform:scaleX(1.1144);">92</span>
<svg style="position:absolute;left:581px;top:497px;" width="36" height="40" viewBox="581 497 36 40"><path d="M595.06 500.18 Q598.80 498.01 602.54 500.18 L611.42 505.33 Q615.16 507.50 615.16 511.82 L615.16 521.98 Q615.16 526.30 611.42 528.47 L602.54 533.62 Q598.80 535.79 595.06 533.62 L586.18 528.47 Q582.44 526.30 582.44 521.98 L582.44 511.82 Q582.44 507.50 586.18 505.33 Z" fill="#f2a02f"/><path d="M598.54 505.62 L602.21 509.91 L607.54 509.99 L609.20 512.53 L598.97 528.18 L595.04 523.72 L589.36 523.37 L588.40 521.80 Z" fill="#fff" stroke="#fff" stroke-width="0.8" stroke-linejoin="round"/></svg>
<span class="t" style="left:628.49px;top:504px;font-size:25px;line-height:25px;font-weight:400;color:#2f2f2f;transform:scaleX(1.0798);">Laptop Crashes</span>
<span class="t" style="left:1218.86px;top:504px;font-size:25px;line-height:25px;font-weight:400;color:#2f2f2f;transform:scaleX(1.0952);">Benjamin Allen</span>
<div style="position:absolute;left:1500px;top:509px;width:18px;height:18px;background:#d0d1d6;border-radius:50%"></div>
<span class="t" style="left:1525.10px;top:504px;font-size:25px;line-height:25px;font-weight:400;color:#2f2f2f;transform:scaleX(1.0767);">Heather Graham</span>
<svg style="position:absolute;left:1828px;top:495px;" width="40" height="46" viewBox="1828 495 40 46"><circle cx="1848" cy="521" r="14.6" fill="#fff" stroke="#8b9298" stroke-width="2.9"/><circle cx="1848" cy="521" r="11" fill="#eeeeef"/><path d="M1841 500.2 L1855 500.2" stroke="#8b9298" stroke-width="3.1"/><path d="M1848 511.5 L1848 521.5 L1856.5 521.5" stroke="#8b9298" stroke-width="2.4" fill="none"/></svg>
<div style="position:absolute;left:2088px;top:516.4px;width:6px;height:2.6px;background:#333"></div>
<div class="cb" style="left:194px;top:597px"></div>
<svg style="position:absolute;left:254px;top:594px;" width="36" height="36" viewBox="254 594 36 36"><g transform="translate(0 192)"><g fill="none" stroke="#83878b" stroke-width="1.75" stroke-linejoin="round" stroke-linecap="round">
<path d="M259.2 432.4 L259.2 424.8 L274.2 410.4 L281.8 417.8 L266.8 432.4 Z"/><path d="M275.8 408.6 L283.6 416.2" stroke-width="1.5"/><path d="M277.6 406.8 L285.6 414.6" stroke-width="1.5"/></g></g></svg>
<svg style="position:absolute;left:318px;top:596px;" width="40" height="34" viewBox="318 596 40 34"><g transform="translate(0 192)"><g fill="none" stroke="#83878b" stroke-width="2.05" stroke-linejoin="round"><rect x="323.4" y="410.3" width="29.1" height="21.4" rx="3"/><path d="M324.5 411.8 L337.95 423.6 L351.4 411.8"/></g></g></svg>
<svg style="position:absolute;left:384px;top:594px;" width="36" height="38" viewBox="384 594 36 38"><g transform="translate(0 192)"><rect x="388.9" y="408.2" width="25.9" height="25.6" fill="none" stroke="#83878b" stroke-width="1.95"/><path d="M394 414 L409.9 414 M394 420.1 L409.9 420.1 M394 426 L401.6 426" stroke="#83878b" stroke-width="1.95" fill="none"/></g></svg>
<span class="t" style="left:473.12px;top:601px;font-size:26px;line-height:26px;font-weight:400;color:#2f2f2f;transform:scaleX(0.9811);">91</span>
<svg style="position:absolute;left:581px;top:593px;" width="36" height="40" viewBox="581 593 36 40"><path d="M595.06 596.18 Q598.80 594.01 602.54 596.18 L611.42 601.33 Q615.16 603.50 615.16 607.82 L615.16 617.98 Q615.16 622.30 611.42 624.47 L602.54 629.62 Q598.80 631.79 595.06 629.62 L586.18 624.47 Q582.44 622.30 582.44 617.98 L582.44 607.82 Q582.44 603.50 586.18 601.33 Z" fill="#f2a02f"/><path d="M598.54 601.62 L602.21 605.91 L607.54 605.99 L609.20 608.53 L598.97 624.18 L595.04 619.72 L589.36 619.37 L588.40 617.80 Z" fill="#fff" stroke="#fff" stroke-width="0.8" stroke-linejoin="round"/></svg>
<span class="t" style="left:630.90px;top:600px;font-size:25px;line-height:25px;font-weight:400;color:#2f2f2f;transform:scaleX(1.0889);">Application Crashes</span>
<span class="t" style="left:1218.95px;top:600px;font-size:25px;line-height:25px;font-weight:400;color:#2f2f2f;transform:scaleX(1.0478);">Bella Mark</span>
<div style="position:absolute;left:1500px;top:605px;width:18px;height:18px;background:#d0d1d6;border-radius:50%"></div>
<span class="t" style="left:1525.06px;top:600px;font-size:25px;line-height:25px;font-weight:400;color:#2f2f2f;transform:scaleX(1.0931);">Howard Stern</span>
<svg style="position:absolute;left:1828px;top:591px;" width="40" height="46" viewBox="1828 591 40 46"><circle cx="1848" cy="617" r="14.6" fill="#fff" stroke="#8b9298" stroke-width="2.9"/><circle cx="1848" cy="617" r="11" fill="#eeeeef"/><path d="M1841 596.2 L1855 596.2" stroke="#8b9298" stroke-width="3.1"/><path d="M1848 607.5 L1848 617.5 L1856.5 617.5" stroke="#8b9298" stroke-width="2.4" fill="none"/></svg>
<div style="position:absolute;left:2088px;top:612.4px;width:6px;height:2.6px;background:#333"></div>
<div class="cb" style="left:194px;top:693px"></div>
<svg style="position:absolute;left:254px;top:690px;" width="36" height="36" viewBox="254 690 36 36"><g transform="translate(0 288)"><g fill="none" stroke="#83878b" stroke-width="1.75" stroke-linejoin="round" stroke-linecap="round">
<path d="M259.2 432.4 L259.2 424.8 L274.2 410.4 L281.8 417.8 L266.8 432.4 Z"/><path d="M275.8 408.6 L283.6 416.2" stroke-width="1.5"/><path d="M277.6 406.8 L285.6 414.6" stroke-width="1.5"/></g></g></svg>
<svg style="position:absolute;left:318px;top:692px;" width="40" height="34" viewBox="318 692 40 34"><g transform="translate(0 288)"><g fill="none" stroke="#83878b" stroke-width="2.05" stroke-linejoin="round"><rect x="323.4" y="410.3" width="29.1" height="21.4" rx="3"/><path d="M324.5 411.8 L337.95 423.6 L351.4 411.8"/></g></g></svg>
<svg style="position:absolute;left:384px;top:690px;" width="36" height="38" viewBox="384 690 36 38"><g transform="translate(0 288)"><rect x="388.9" y="408.2" width="25.9" height="25.6" fill="none" stroke="#83878b" stroke-width="1.95"/><path d="M394 414 L409.9 414 M394 420.1 L409.9 420.1 M394 426 L401.6 426" stroke="#83878b" stroke-width="1.95" fill="none"/></g></svg>
<span class="t" style="left:473.10px;top:697px;font-size:26px;line-height:26px;font-weight:400;color:#2f2f2f;">77</span>
<svg style="position:absolute;left:581px;top:689px;" width="36" height="40" viewBox="581 689 36 40"><path d="M595.06 692.18 Q598.80 690.01 602.54 692.18 L611.42 697.33 Q615.16 699.50 615.16 703.82 L615.16 713.98 Q615.16 718.30 611.42 720.47 L602.54 725.62 Q598.80 727.79 595.06 725.62 L586.18 720.47 Q582.44 718.30 582.44 713.98 L582.44 703.82 Q582.44 699.50 586.18 697.33 Z" fill="#f2a02f"/><path d="M598.54 697.62 L602.21 701.91 L607.54 701.99 L609.20 704.53 L598.97 720.18 L595.04 715.72 L589.36 715.37 L588.40 713.80 Z" fill="#fff" stroke="#fff" stroke-width="0.8" stroke-linejoin="round"/></svg>
<span class="t" style="left:630.86px;top:696px;font-size:25px;line-height:25px;font-weight:400;color:#2f2f2f;transform:scaleX(1.0878);">Touchpad issue</span>
<svg style="position:absolute;left:1219px;top:692px;" width="28" height="35" viewBox="1219 692 28 35"><path d="M1233 693.8 C1237 696.4 1242 697.4 1246 697.5999999999999 L1246 709.8 C1246 718.3 1239 723.3 1233 725.8 C1227 723.3 1220 718.3 1220 709.8 L1220 697.5999999999999 C1224 697.4 1229 696.4 1233 693.8 Z" fill="#6b58c9"/><path d="M1233.00 700.80 L1230.71 704.84 L1226.15 705.78 L1229.29 709.21 L1228.77 713.82 L1233.00 711.90 L1237.23 713.82 L1236.71 709.21 L1239.85 705.78 L1235.29 704.84 Z" fill="#f3a63c" stroke="#f3a63c" stroke-width="1.6" stroke-linejoin="round"/></svg>
<span class="t" style="left:1256.69px;top:696px;font-size:25px;line-height:25px;font-weight:400;color:#2f2f2f;transform:scaleX(1.0861);">Clark Kingston</span>
<div style="position:absolute;left:1500px;top:701px;width:18px;height:18px;background:#d0d1d6;border-radius:50%"></div>
<span class="t" style="left:1525.06px;top:696px;font-size:25px;line-height:25px;font-weight:400;color:#2f2f2f;transform:scaleX(1.0931);">Howard Stern</span>
<svg style="position:absolute;left:1830px;top:686px;" width="40" height="47" viewBox="1830 686 40 47"><circle cx="1850" cy="712.5" r="15.4" fill="#fff" stroke="#3f82ef" stroke-width="2.6"/><circle cx="1850" cy="712.5" r="10.2" fill="#d4d7dd"/><path d="M1842 692.3 Q1850 690.7 1858 692.3" stroke="#3f82ef" stroke-width="2.4" fill="none"/><path d="M1850 701.5 L1850 713.5" stroke="#3f82ef" stroke-width="2.6"/></svg>
<span class="t" style="left:2085.89px;top:696px;font-size:25px;line-height:25px;font-weight:400;color:#2f2f2f;transform:scaleX(1.0796);">Data Management</span>
<div class="cb" style="left:194px;top:789px"></div>
<svg style="position:absolute;left:254px;top:786px;" width="36" height="36" viewBox="254 786 36 36"><g transform="translate(0 384)"><g fill="none" stroke="#83878b" stroke-width="1.75" stroke-linejoin="round" stroke-linecap="round">
<path d="M259.2 432.4 L259.2 424.8 L274.2 410.4 L281.8 417.8 L266.8 432.4 Z"/><path d="M275.8 408.6 L283.6 416.2" stroke-width="1.5"/><path d="M277.6 406.8 L285.6 414.6" stroke-width="1.5"/></g></g></svg>
<svg style="position:absolute;left:318px;top:788px;" width="40" height="34" viewBox="318 788 40 34"><g transform="translate(0 384)"><g fill="none" stroke="#83878b" stroke-width="2.05" stroke-linejoin="round"><rect x="323.4" y="410.3" width="29.1" height="21.4" rx="3"/><path d="M324.5 411.8 L337.95 423.6 L351.4 411.8"/></g></g></svg>
<svg style="position:absolute;left:384px;top:786px;" width="36" height="38" viewBox="384 786 36 38"><g transform="translate(0 384)"><rect x="388.9" y="408.2" width="25.9" height="25.6" fill="#f8e9d6" stroke="#ef9a3a" stroke-width="1.95"/><path d="M394 414 L409.9 414 M394 420.1 L409.9 420.1 M394 426 L401.6 426" stroke="#ef9a3a" stroke-width="1.95" fill="none"/></g></svg>
<span class="t" style="left:472.76px;top:793px;font-size:26px;line-height:26px;font-weight:400;color:#2f2f2f;transform:scaleX(1.0718);">76</span>
<svg style="position:absolute;left:581px;top:785px;" width="36" height="40" viewBox="581 785 36 40"><path d="M595.06 788.18 Q598.80 786.01 602.54 788.18 L611.42 793.33 Q615.16 795.50 615.16 799.82 L615.16 809.98 Q615.16 814.30 611.42 816.47 L602.54 821.62 Q598.80 823.79 595.06 821.62 L586.18 816.47 Q582.44 814.30 582.44 809.98 L582.44 799.82 Q582.44 795.50 586.18 793.33 Z" fill="#f2a02f"/><path d="M598.54 793.62 L602.21 797.91 L607.54 797.99 L609.20 800.53 L598.97 816.18 L595.04 811.72 L589.36 811.37 L588.40 809.80 Z" fill="#fff" stroke="#fff" stroke-width="0.8" stroke-linejoin="round"/></svg>
<span class="t" style="left:630.37px;top:792px;font-size:25px;line-height:25px;font-weight:400;color:#2f2f2f;transform:scaleX(1.1074);">Wifi keeps getting disconnected on office</span>
<span class="t" style="left:628.86px;top:836px;font-size:25px;line-height:25px;font-weight:400;color:#2f2f2f;transform:scaleX(1.1663);">laptop</span>
<span class="t" style="left:1218.86px;top:792px;font-size:25px;line-height:25px;font-weight:400;color:#2f2f2f;transform:scaleX(1.0952);">Benjamin Allen</span>
<div style="position:absolute;left:1500px;top:797px;width:18px;height:18px;background:#d0d1d6;border-radius:50%"></div>
<span class="t" style="left:1527.47px;top:792px;font-size:25px;line-height:25px;font-weight:400;color:#2f2f2f;transform:scaleX(1.0697);">Jeniffer Doe</span>
<div style="position:absolute;left:2088px;top:804.4px;width:6px;height:2.6px;background:#333"></div>
<div class="cb" style="left:194px;top:927px"></div>
<svg style="position:absolute;left:254px;top:924px;" width="36" height="36" viewBox="254 924 36 36"><g transform="translate(0 522)"><g fill="none" stroke="#83878b" stroke-width="1.75" stroke-linejoin="round" stroke-linecap="round">
<path d="M259.2 432.4 L259.2 424.8 L274.2 410.4 L281.8 417.8 L266.8 432.4 Z"/><path d="M275.8 408.6 L283.6 416.2" stroke-width="1.5"/><path d="M277.6 406.8 L285.6 414.6" stroke-width="1.5"/></g></g></svg>
<svg style="position:absolute;left:318px;top:926px;" width="40" height="34" viewBox="318 926 40 34"><g transform="translate(0 522)"><g fill="none" stroke="#83878b" stroke-width="2.05" stroke-linejoin="round"><rect x="323.4" y="410.3" width="29.1" height="21.4" rx="3"/><path d="M324.5 411.8 L337.95 423.6 L351.4 411.8"/></g></g></svg>
<svg style="position:absolute;left:384px;top:924px;" width="36" height="38" viewBox="384 924 36 38"><g transform="translate(0 522)"><rect x="388.9" y="408.2" width="25.9" height="25.6" fill="none" stroke="#83878b" stroke-width="1.95"/><path d="M394 414 L409.9 414 M394 420.1 L409.9 420.1 M394 426 L401.6 426" stroke="#83878b" stroke-width="1.95" fill="none"/></g></svg>
<span class="t" style="left:473.27px;top:931px;font-size:26px;line-height:26px;font-weight:700;color:#2f2f2f;transform:scaleX(1.0809);">75</span>
<svg style="position:absolute;left:581px;top:923px;" width="36" height="40" viewBox="581 923 36 40"><path d="M595.06 926.18 Q598.80 924.01 602.54 926.18 L611.42 931.33 Q615.16 933.50 615.16 937.82 L615.16 947.98 Q615.16 952.30 611.42 954.47 L602.54 959.62 Q598.80 961.79 595.06 959.62 L586.18 954.47 Q582.44 952.30 582.44 947.98 L582.44 937.82 Q582.44 933.50 586.18 931.33 Z" fill="#f2a02f"/><path d="M598.54 931.62 L602.21 935.91 L607.54 935.99 L609.20 938.53 L598.97 954.18 L595.04 949.72 L589.36 949.37 L588.40 947.80 Z" fill="#fff" stroke="#fff" stroke-width="0.8" stroke-linejoin="round"/></svg>
<span class="t" style="left:629.86px;top:930px;font-size:25px;line-height:25px;font-weight:700;color:#2f2f2f;transform:scaleX(1.0401);">Certain keys on the keyboard are not</span>
<span class="t" style="left:630.90px;top:974px;font-size:25px;line-height:25px;font-weight:700;color:#2f2f2f;transform:scaleX(1.0653);">working</span>
<span class="t" style="left:1219.72px;top:930px;font-size:25px;line-height:25px;font-weight:700;color:#2f2f2f;transform:scaleX(1.0431);">Diana Patrick</span>
<span class="t" style="left:1500.42px;top:930px;font-size:25px;line-height:25px;font-weight:700;color:#2f2f2f;transform:scaleX(1.0563);">Unassigned</span>
<div style="position:absolute;left:2088px;top:942.4px;width:6px;height:2.6px;background:#333"></div>
<div class="cb" style="left:194px;top:1065px"></div>
<svg style="position:absolute;left:254px;top:1062px;" width="36" height="36" viewBox="254 1062 36 36"><g transform="translate(0 660)"><g fill="none" stroke="#83878b" stroke-width="1.75" stroke-linejoin="round" stroke-linecap="round">
<path d="M259.2 432.4 L259.2 424.8 L274.2 410.4 L281.8 417.8 L266.8 432.4 Z"/><path d="M275.8 408.6 L283.6 416.2" stroke-width="1.5"/><path d="M277.6 406.8 L285.6 414.6" stroke-width="1.5"/></g></g></svg>
<svg style="position:absolute;left:318px;top:1064px;" width="40" height="34" viewBox="318 1064 40 34"><g transform="translate(0 660)"><g fill="none" stroke="#83878b" stroke-width="2.05" stroke-linejoin="round"><rect x="323.4" y="410.3" width="29.1" height="21.4" rx="3"/><path d="M324.5 411.8 L337.95 423.6 L351.4 411.8"/></g></g></svg>
<svg style="position:absolute;left:384px;top:1062px;" width="36" height="38" viewBox="384 1062 36 38"><g transform="translate(0 660)"><rect x="388.9" y="408.2" width="25.9" height="25.6" fill="none" stroke="#83878b" stroke-width="1.95"/><path d="M394 414 L409.9 414 M394 420.1 L409.9 420.1 M394 426 L401.6 426" stroke="#83878b" stroke-width="1.95" fill="none"/></g></svg>
<span class="t" style="left:473.07px;top:1069px;font-size:26px;line-height:26px;font-weight:400;color:#2f2f2f;transform:scaleX(1.0259);">74</span>
<svg style="position:absolute;left:581px;top:1061px;" width="36" height="40" viewBox="581 1061 36 40"><path d="M595.06 1064.18 Q598.80 1062.01 602.54 1064.18 L611.42 1069.33 Q615.16 1071.50 615.16 1075.82 L615.16 1085.98 Q615.16 1090.30 611.42 1092.47 L602.54 1097.62 Q598.80 1099.79 595.06 1097.62 L586.18 1092.47 Q582.44 1090.30 582.44 1085.98 L582.44 1075.82 Q582.44 1071.50 586.18 1069.33 Z" fill="#f2a02f"/><path d="M598.54 1069.62 L602.21 1073.91 L607.54 1073.99 L609.20 1076.53 L598.97 1092.18 L595.04 1087.72 L589.36 1087.37 L588.40 1085.80 Z" fill="#fff" stroke="#fff" stroke-width="0.8" stroke-linejoin="round"/></svg>
<span class="t" style="left:628.46px;top:1068px;font-size:25px;line-height:25px;font-weight:400;color:#2f2f2f;transform:scaleX(1.0929);">Downloaded apps crash frequently</span>
<span class="t" style="left:1221.28px;top:1068px;font-size:25px;line-height:25px;font-weight:400;color:#2f2f2f;transform:scaleX(1.0455);">Jean George</span>
<div style="position:absolute;left:1500px;top:1073px;width:18px;height:18px;background:#d0d1d6;border-radius:50%"></div>
<span class="t" style="left:1525.06px;top:1068px;font-size:25px;line-height:25px;font-weight:400;color:#2f2f2f;transform:scaleX(1.0931);">Howard Stern</span>
<div style="position:absolute;left:2088px;top:1080.4px;width:6px;height:2.6px;background:#333"></div>
<div class="cb" style="left:194px;top:1161px"></div>
<svg style="position:absolute;left:254px;top:1158px;" width="36" height="36" viewBox="254 1158 36 36"><g transform="translate(0 756)"><g fill="none" stroke="#83878b" stroke-width="1.75" stroke-linejoin="round" stroke-linecap="round">
<path d="M259.2 432.4 L259.2 424.8 L274.2 410.4 L281.8 417.8 L266.8 432.4 Z"/><path d="M275.8 408.6 L283.6 416.2" stroke-width="1.5"/><path d="M277.6 406.8 L285.6 414.6" stroke-width="1.5"/></g></g></svg>
<svg style="position:absolute;left:318px;top:1160px;" width="40" height="34" viewBox="318 1160 40 34"><g transform="translate(0 756)"><g fill="none" stroke="#83878b" stroke-width="2.05" stroke-linejoin="round"><rect x="323.4" y="410.3" width="29.1" height="21.4" rx="3"/><path d="M324.5 411.8 L337.95 423.6 L351.4 411.8"/></g></g></svg>
<svg style="position:absolute;left:384px;top:1158px;" width="36" height="38" viewBox="384 1158 36 38"><g transform="translate(0 756)"><rect x="388.9" y="408.2" width="25.9" height="25.6" fill="#f8e9d6" stroke="#ef9a3a" stroke-width="1.95"/><path d="M394 414 L409.9 414 M394 420.1 L409.9 420.1 M394 426 L401.6 426" stroke="#ef9a3a" stroke-width="1.95" fill="none"/></g></svg>
<span class="t" style="left:473.27px;top:1165px;font-size:26px;line-height:26px;font-weight:700;color:#2f2f2f;transform:scaleX(1.0815);">73</span>
<svg style="position:absolute;left:549px;top:1159px;" width="29" height="36" viewBox="549 1159 29 36"><g transform="translate(563.2 1177) rotate(27) scale(1.1)" fill="none" stroke="#8d9298" stroke-width="1.8" stroke-linecap="round"><path d="M5.2 -6 L5.2 7.5 A5.2 5.2 0 0 1 -5.2 7.5 L-5.2 -9 A3.6 3.6 0 0 1 2 -9 L2 6.5 A1.9 1.9 0 0 1 -1.8 6.5 L-1.8 -5"/></g></svg>
<svg style="position:absolute;left:581px;top:1157px;" width="36" height="40" viewBox="581 1157 36 40"><path d="M595.06 1160.18 Q598.80 1158.01 602.54 1160.18 L611.42 1165.33 Q615.16 1167.50 615.16 1171.82 L615.16 1181.98 Q615.16 1186.30 611.42 1188.47 L602.54 1193.62 Q598.80 1195.79 595.06 1193.62 L586.18 1188.47 Q582.44 1186.30 582.44 1181.98 L582.44 1171.82 Q582.44 1167.50 586.18 1165.33 Z" fill="#f2a02f"/><path d="M598.54 1165.62 L602.21 1169.91 L607.54 1169.99 L609.20 1172.53 L598.97 1188.18 L595.04 1183.72 L589.36 1183.37 L588.40 1181.80 Z" fill="#fff" stroke="#fff" stroke-width="0.8" stroke-linejoin="round"/></svg>
<span class="t" style="left:629.29px;top:1164px;font-size:25px;line-height:25px;font-weight:700;color:#2f2f2f;transform:scaleX(1.0655);">Problem with email attachments</span>
<span class="t" style="left:1219.72px;top:1164px;font-size:25px;line-height:25px;font-weight:700;color:#2f2f2f;transform:scaleX(1.0458);">Henry James</span>
<span class="t" style="left:1500.42px;top:1164px;font-size:25px;line-height:25px;font-weight:700;color:#2f2f2f;transform:scaleX(1.0563);">Unassigned</span>
<svg style="position:absolute;left:1828px;top:1155px;" width="40" height="46" viewBox="1828 1155 40 46"><circle cx="1848" cy="1181" r="14.6" fill="#fff" stroke="#8b9298" stroke-width="2.9"/><circle cx="1848" cy="1181" r="11" fill="#eeeeef"/><path d="M1841 1160.2 L1855 1160.2" stroke="#8b9298" stroke-width="3.1"/><path d="M1848 1171.5 L1848 1181.5 L1856.5 1181.5" stroke="#8b9298" stroke-width="2.4" fill="none"/></svg>
<span class="t" style="left:2086.69px;top:1164px;font-size:25px;line-height:25px;font-weight:700;color:#2f2f2f;transform:scaleX(1.0614);">Hardware Problems</span>
<div class="cb" style="left:194px;top:1257px"></div>
<svg style="position:absolute;left:254px;top:1254px;" width="36" height="36" viewBox="254 1254 36 36"><g transform="translate(0 852)"><g fill="none" stroke="#83878b" stroke-width="1.75" stroke-linejoin="round" stroke-linecap="round">
<path d="M259.2 432.4 L259.2 424.8 L274.2 410.4 L281.8 417.8 L266.8 432.4 Z"/><path d="M275.8 408.6 L283.6 416.2" stroke-width="1.5"/><path d="M277.6 406.8 L285.6 414.6" stroke-width="1.5"/></g></g></svg>
<svg style="position:absolute;left:318px;top:1256px;" width="40" height="34" viewBox="318 1256 40 34"><g transform="translate(0 852)"><g fill="none" stroke="#83878b" stroke-width="2.05" stroke-linejoin="round"><rect x="323.4" y="410.3" width="29.1" height="21.4" rx="3"/><path d="M324.5 411.8 L337.95 423.6 L351.4 411.8"/></g></g></svg>
<svg style="position:absolute;left:384px;top:1254px;" width="36" height="38" viewBox="384 1254 36 38"><g transform="translate(0 852)"><rect x="388.9" y="408.2" width="25.9" height="25.6" fill="none" stroke="#83878b" stroke-width="1.95"/><path d="M394 414 L409.9 414 M394 420.1 L409.9 420.1 M394 426 L401.6 426" stroke="#83878b" stroke-width="1.95" fill="none"/></g></svg>
<span class="t" style="left:472.78px;top:1261px;font-size:26px;line-height:26px;font-weight:400;color:#2f2f2f;transform:scaleX(1.0553);">72</span>
<svg style="position:absolute;left:581px;top:1253px;" width="36" height="40" viewBox="581 1253 36 40"><path d="M595.06 1256.18 Q598.80 1254.01 602.54 1256.18 L611.42 1261.33 Q615.16 1263.50 615.16 1267.82 L615.16 1277.98 Q615.16 1282.30 611.42 1284.47 L602.54 1289.62 Q598.80 1291.79 595.06 1289.62 L586.18 1284.47 Q582.44 1282.30 582.44 1277.98 L582.44 1267.82 Q582.44 1263.50 586.18 1261.33 Z" fill="#f2a02f"/><path d="M598.54 1261.62 L602.21 1265.91 L607.54 1265.99 L609.20 1268.53 L598.97 1284.18 L595.04 1279.72 L589.36 1279.37 L588.40 1277.80 Z" fill="#fff" stroke="#fff" stroke-width="0.8" stroke-linejoin="round"/></svg>
<span class="t" style="left:628.75px;top:1260px;font-size:25px;line-height:25px;font-weight:400;color:#2f2f2f;transform:scaleX(1.0726);">Upgrade OS</span>
<svg style="position:absolute;left:1219px;top:1256px;" width="28" height="35" viewBox="1219 1256 28 35"><path d="M1233 1257.8 C1237 1260.3999999999999 1242 1261.3999999999999 1246 1261.6 L1246 1273.8 C1246 1282.3 1239 1287.3 1233 1289.8 C1227 1287.3 1220 1282.3 1220 1273.8 L1220 1261.6 C1224 1261.3999999999999 1229 1260.3999999999999 1233 1257.8 Z" fill="#6b58c9"/><path d="M1233.00 1264.80 L1230.71 1268.84 L1226.15 1269.78 L1229.29 1273.21 L1228.77 1277.82 L1233.00 1275.90 L1237.23 1277.82 L1236.71 1273.21 L1239.85 1269.78 L1235.29 1268.84 Z" fill="#f3a63c" stroke="#f3a63c" stroke-width="1.6" stroke-linejoin="round"/></svg>
<span class="t" style="left:1255.88px;top:1260px;font-size:25px;line-height:25px;font-weight:400;color:#2f2f2f;transform:scaleX(1.0837);">Bruce Williams</span>
<div style="position:absolute;left:1500px;top:1265px;width:18px;height:18px;background:#d0d1d6;border-radius:50%"></div>
<span class="t" style="left:1527.47px;top:1260px;font-size:25px;line-height:25px;font-weight:400;color:#2f2f2f;transform:scaleX(1.0594);">John Roberts</span>
<svg style="position:absolute;left:1828px;top:1251px;" width="40" height="46" viewBox="1828 1251 40 46"><circle cx="1848" cy="1277" r="14.6" fill="#fff" stroke="#8b9298" stroke-width="2.9"/><circle cx="1848" cy="1277" r="11" fill="#eeeeef"/><path d="M1841 1256.2 L1855 1256.2" stroke="#8b9298" stroke-width="3.1"/><path d="M1848 1267.5 L1848 1277.5 L1856.5 1277.5" stroke="#8b9298" stroke-width="2.4" fill="none"/></svg>
<div style="position:absolute;left:2088px;top:1272.4px;width:6px;height:2.6px;background:#333"></div>
<div class="cb" style="left:194px;top:1353px"></div>
<svg style="position:absolute;left:254px;top:1350px;" width="36" height="36" viewBox="254 1350 36 36"><g transform="translate(0 948)"><g fill="none" stroke="#83878b" stroke-width="1.75" stroke-linejoin="round" stroke-linecap="round">
<path d="M259.2 432.4 L259.2 424.8 L274.2 410.4 L281.8 417.8 L266.8 432.4 Z"/><path d="M275.8 408.6 L283.6 416.2" stroke-width="1.5"/><path d="M277.6 406.8 L285.6 414.6" stroke-width="1.5"/></g></g></svg>
<svg style="position:absolute;left:318px;top:1352px;" width="40" height="34" viewBox="318 1352 40 34"><g transform="translate(0 948)"><g fill="none" stroke="#83878b" stroke-width="2.05" stroke-linejoin="round"><rect x="323.4" y="410.3" width="29.1" height="21.4" rx="3"/><path d="M324.5 411.8 L337.95 423.6 L351.4 411.8"/></g></g></svg>
<svg style="position:absolute;left:384px;top:1350px;" width="36" height="38" viewBox="384 1350 36 38"><g transform="translate(0 948)"><rect x="388.9" y="408.2" width="25.9" height="25.6" fill="none" stroke="#83878b" stroke-width="1.95"/><path d="M394 414 L409.9 414 M394 420.1 L409.9 420.1 M394 426 L401.6 426" stroke="#83878b" stroke-width="1.95" fill="none"/></g></svg>
<span class="t" style="left:473.18px;top:1357px;font-size:26px;line-height:26px;font-weight:400;color:#2f2f2f;transform:scaleX(0.9341);">71</span>
<svg style="position:absolute;left:581px;top:1349px;" width="36" height="40" viewBox="581 1349 36 40"><path d="M595.06 1352.18 Q598.80 1350.01 602.54 1352.18 L611.42 1357.33 Q615.16 1359.50 615.16 1363.82 L615.16 1373.98 Q615.16 1378.30 611.42 1380.47 L602.54 1385.62 Q598.80 1387.79 595.06 1385.62 L586.18 1380.47 Q582.44 1378.30 582.44 1373.98 L582.44 1363.82 Q582.44 1359.50 586.18 1357.33 Z" fill="#f2a02f"/><path d="M598.54 1357.62 L602.21 1361.91 L607.54 1361.99 L609.20 1364.53 L598.97 1380.18 L595.04 1375.72 L589.36 1375.37 L588.40 1373.80 Z" fill="#fff" stroke="#fff" stroke-width="0.8" stroke-linejoin="round"/></svg>
<span class="t" style="left:628.44px;top:1356px;font-size:25px;line-height:25px;font-weight:400;color:#2f2f2f;transform:scaleX(1.1073);">Laptop crashed</span>
<span class="t" style="left:1221.28px;top:1356px;font-size:25px;line-height:25px;font-weight:400;color:#2f2f2f;transform:scaleX(1.0455);">Jean George</span>
<div style="position:absolute;left:1500px;top:1361px;width:18px;height:18px;background:#d0d1d6;border-radius:50%"></div>
<span class="t" style="left:1525.15px;top:1356px;font-size:25px;line-height:25px;font-weight:400;color:#2f2f2f;transform:scaleX(1.0478);">Bella Mark</span>
<svg style="position:absolute;left:1828px;top:1347px;" width="40" height="46" viewBox="1828 1347 40 46"><circle cx="1848" cy="1373" r="14.6" fill="#fff" stroke="#8b9298" stroke-width="2.9"/><circle cx="1848" cy="1373" r="11" fill="#eeeeef"/><path d="M1841 1352.2 L1855 1352.2" stroke="#8b9298" stroke-width="3.1"/><path d="M1848 1363.5 L1848 1373.5 L1856.5 1373.5" stroke="#8b9298" stroke-width="2.4" fill="none"/></svg>
<div style="position:absolute;left:2088px;top:1368.4px;width:6px;height:2.6px;background:#333"></div>
<div style="position:absolute;left:1731px;top:751px;width:756px;height:392.5px;background:#fff;border-radius:9px;box-shadow:0 7px 22px rgba(0,0,0,0.11),0 0 2px rgba(0,0,0,0.13)"></div>
<svg style="position:absolute;left:1828px;top:728px;" width="44" height="28" viewBox="1828 728 44 28"><path d="M1834.6 752 L1850.7 734 L1866.8 752" fill="#fff" stroke="#e7e7e8" stroke-width="2.4"/><rect x="1834" y="751" width="32.4" height="4" fill="#fff"/></svg>
<div style="position:absolute;box-sizing:border-box;left:1761px;top:781px;width:696px;height:332px;background:#fafafa;border:2px solid #ececec;border-radius:3px"></div>
<span class="t" style="left:1793.40px;top:816px;font-size:25.6px;line-height:25.6px;font-weight:700;color:#2b2b2b;transform:scaleX(1.0056);">Technician 1 (SD Admin)</span>
<span class="t" style="left:1792.28px;top:846px;font-size:25px;line-height:25px;font-weight:400;color:#6a6a6a;transform:scaleX(1.0960);">Started on</span>
<span class="t" style="left:1928.30px;top:848px;font-size:23.4px;line-height:23.4px;font-weight:400;color:#333;transform:scaleX(1.0415);">Apr 30, 2024 05:21 PM</span>
<div style="position:absolute;left:2301.5px;top:823px;width:124px;height:52px;background:#ecf6fd;border-radius:9px"></div>
<span class="t" style="left:2313.76px;top:837px;font-size:24.5px;line-height:24.5px;font-weight:700;color:#555;transform:scaleX(1.0279);">13h 45m</span>
<span class="t" style="left:1793.38px;top:896px;font-size:25px;line-height:25px;font-weight:400;color:#2f2f2f;transform:scaleX(1.0989);">Worklog Comment test</span>
<div style="position:absolute;left:1793px;top:947px;width:64px;height:40px;background:#d3d3d8;border-radius:20px"></div>
<div style="position:absolute;left:1800.6px;top:952.2px;width:29.6px;height:29.6px;background:#fff;border-radius:50%"></div>
<span class="t" style="left:1867.33px;top:952px;font-size:25px;line-height:25px;font-weight:400;color:#2f2f2f;transform:scaleX(1.0973);">Include non operational hours</span>
<span class="t" style="left:1981.05px;top:1031px;font-size:26px;line-height:26px;font-weight:400;color:#4285f0;transform:scaleX(1.0361);">Stop My Timer</span>
<div style="position:absolute;left:2173px;top:1027px;width:252px;height:54.6px;background:#4584ee;border-radius:28px"></div>
<span class="t" style="left:2207.90px;top:1042px;font-size:25px;line-height:25px;font-weight:400;color:#fff;transform:scaleX(1.0039);-webkit-text-stroke:0.3px #fff;">Add My Worklog</span>
<div style="position:absolute;left:0px;top:1372px;width:144px;height:2px;background:#20262f"></div>
<div style="position:absolute;left:144px;top:1360px;width:2414px;height:8px;background:linear-gradient(to bottom,rgba(0,0,0,0),rgba(0,0,0,0.035))"></div>
<div style="position:absolute;left:144px;top:1368px;width:2414px;height:6px;background:linear-gradient(to bottom,#f8f8f8,#e3e3e3)"></div>
</div>
</body></html>
